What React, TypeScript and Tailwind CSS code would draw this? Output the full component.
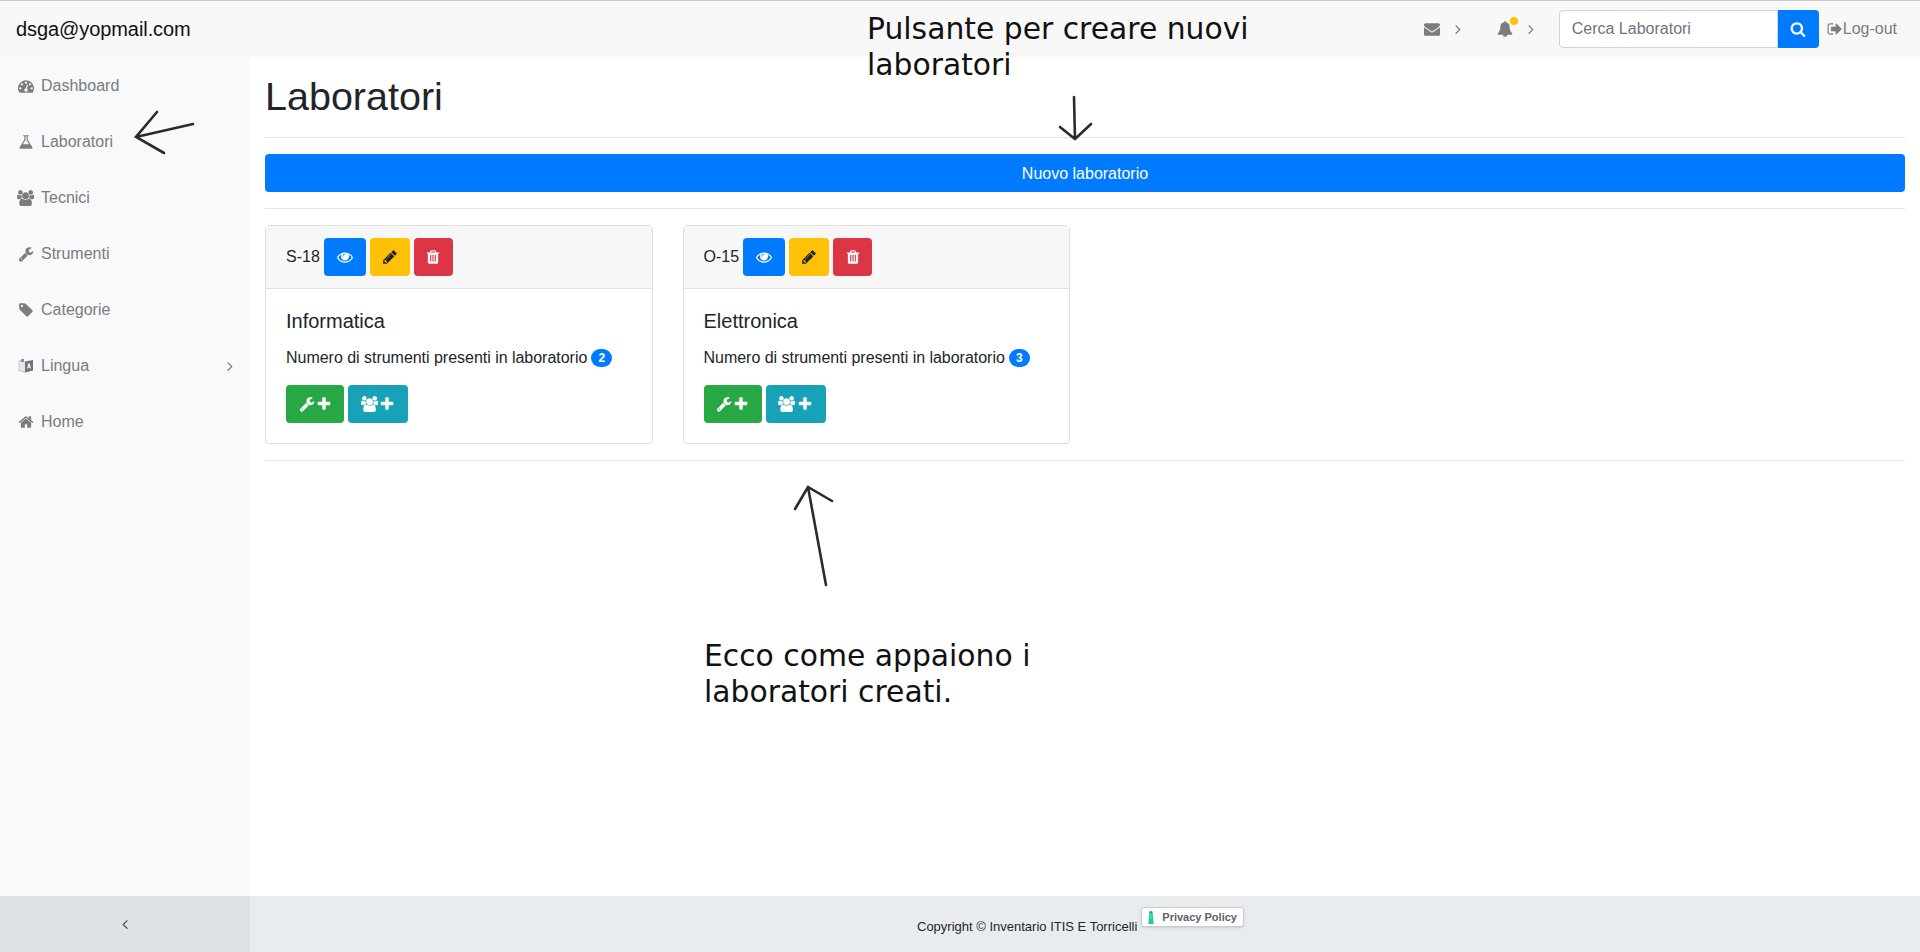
import type { ReactNode } from 'react'

// icone font-awesome 4 (viewBox 1792)
const paths = {
  dashboard:
    'M384 1152q0-53-37.5-90.5t-90.5-37.5-90.5 37.5-37.5 90.5 37.5 90.5 90.5 37.5 90.5-37.5 37.5-90.5zm192-448q0-53-37.5-90.5t-90.5-37.5-90.5 37.5-37.5 90.5 37.5 90.5 90.5 37.5 90.5-37.5 37.5-90.5zm428 481l101-382q6-26-7.5-48.5t-38.5-29.5-48 6.5-30 39.5l-101 382q-60 5-107 43.5t-63 98.5q-20 77 20 146t117 89 146-20 89-117q16-60-6-117t-72-91zm660-33q0-53-37.5-90.5t-90.5-37.5-90.5 37.5-37.5 90.5 37.5 90.5 90.5 37.5 90.5-37.5 37.5-90.5zm-640-640q0-53-37.5-90.5t-90.5-37.5-90.5 37.5-37.5 90.5 37.5 90.5 90.5 37.5 90.5-37.5 37.5-90.5zm448 192q0-53-37.5-90.5t-90.5-37.5-90.5 37.5-37.5 90.5 37.5 90.5 90.5 37.5 90.5-37.5 37.5-90.5zm320 448q0 261-141 483-19 29-54 29h-1402q-35 0-54-29-141-221-141-483 0-182 71-348t191-286 286-191 348-71 348 71 286 191 191 286 71 348z',
  flask:
    'M1591 1448q56 89 21.5 152.5t-140.5 63.5h-1152q-106 0-140.5-63.5t21.5-152.5l503-793v-399h-64q-26 0-45-19t-19-45 19-45 45-19h512q26 0 45 19t19 45-19 45-45 19h-64v399zm-779-725l-272 429h712l-272-429-20-31v-436h-128v436z',
  wrench:
    'M448 1472q0-26-19-45t-45-19-45 19-19 45 19 45 45 19 45-19 19-45zm644-420l-682 682q-37 37-90 37-52 0-91-37l-106-108q-38-36-38-90 0-53 38-91l681-681q39 98 114.5 173.5t173.5 114.5zm634-435q0 39-23 106-47 134-164.5 217.5t-258.5 83.5q-185 0-316.5-131.5t-131.5-316.5 131.5-316.5 316.5-131.5q58 0 121.5 16.5t107.5 46.5q16 11 16 28t-16 28l-293 169v224l193 107q5-3 79-48.5t135.5-81 70.5-35.5q15 0 23.5 10t8.5 25z',
  tag: 'M576 448q0-53-37.5-90.5t-90.5-37.5-90.5 37.5-37.5 90.5 37.5 90.5 90.5 37.5 90.5-37.5 37.5-90.5zm1067 576q0 53-37 90l-491 492q-39 37-91 37-53 0-90-37l-715-716q-38-37-64.5-101t-26.5-117v-416q0-52 38-90t90-38h416q53 0 117 26.5t102 64.5l715 714q37 39 37 91z',
  home: 'M1472 992v480q0 26-19 45t-45 19h-384v-384h-256v384h-384q-26 0-45-19t-19-45v-480q0-1 .5-3t.5-3l575-474 575 474q1 2 1 6zm223-69l-62 74q-8 9-21 11h-3q-13 0-21-7l-692-577-692 577q-12 8-24 7-13-2-21-11l-62-74q-8-10-7-23.5t11-21.5l719-599q32-26 76-26t76 26l244 204v-195q0-14 9-23t23-9h192q14 0 23 9t9 23v408l219 182q10 8 11 21.5t-7 23.5z',
  envelope:
    'M1792 710v794q0 66-47 113t-113 47h-1472q-66 0-113-47t-47-113v-794q44 49 101 87 362 246 497 345 57 42 92.5 65.5t94.5 48 110 24.5h2q51 0 110-24.5t94.5-48 92.5-65.5q170-123 498-345 57-39 100-87zm0-294q0 79-49 151t-122 123q-376 261-468 325-10 7-42.5 30.5t-54 38-52 32.5-57.5 27-50 9h-2q-23 0-50-9t-57.5-27-52-32.5-54-38-42.5-30.5q-91-64-262-182.5t-205-142.5q-62-42-117-115.5t-55-136.5q0-78 41.5-130t118.5-52h1472q65 0 112.5 47t47.5 113z',
  bell: 'M912 1696q0-16-16-16-59 0-101.5-42.5t-42.5-101.5q0-16-16-16t-16 16q0 73 51.5 124.5t124.5 51.5q16 0 16-16zm816-288q0 52-38 90t-90 38h-448q0 106-75 181t-181 75-181-75-75-181h-448q-52 0-90-38t-38-90q50-42 91-88t85-119.5 74.5-158.5 50-206 19.5-260q0-152 117-282.5t307-158.5q-8-19-8-39 0-40 28-68t68-28 68 28 28 68q0 20-8 39 190 28 307 158.5t117 282.5q0 139 19.5 260t50 206 74.5 158.5 85 119.5 91 88z',
  search:
    'M1216 832q0-185-131.5-316.5t-316.5-131.5-316.5 131.5-131.5 316.5 131.5 316.5 316.5 131.5 316.5-131.5 131.5-316.5zm512 832q0 52-38 90t-90 38q-54 0-90-38l-343-342q-179 124-399 124-143 0-273.5-55.5t-225-150-150-225-55.5-273.5 55.5-273.5 150-225 225-150 273.5-55.5 273.5 55.5 225 150 150 225 55.5 273.5q0 220-124 399l343 343q37 37 37 90z',
  signOut:
    'M704 1440q0 4 1 20t.5 26.5-3 23.5-10 19.5-20.5 6.5h-320q-119 0-203.5-84.5t-84.5-203.5v-704q0-119 84.5-203.5t203.5-84.5h320q13 0 22.5 9.5t9.5 22.5q0 4 1 20t.5 26.5-3 23.5-10 19.5-20.5 6.5h-320q-66 0-113 47t-47 113v704q0 66 47 113t113 47h312l11.5 1 11.5 3 8 5.5 7 9 2 13.5zm928-544q0 26-19 45l-544 544q-19 19-45 19t-45-19-19-45v-288h-448q-26 0-45-19t-19-45v-384q0-26 19-45t45-19h448v-288q0-26 19-45t45-19 45 19l544 544q19 19 19 45z',
  pencil:
    'M491 1536l91-91-235-235-91 91v107h128v128h107zm523-928q0-22-22-22-10 0-17 7l-542 542q-7 7-7 17 0 22 22 22 10 0 17-7l542-542q7-7 7-17zm-54-192l416 416-832 832h-416v-416zm683 96q0 53-37 90l-166 166-416-416 166-165q36-38 90-38 53 0 91 38l235 234q37 39 37 91z',
  trash:
    'M704 1376v-704q0-14-9-23t-23-9h-64q-14 0-23 9t-9 23v704q0 14 9 23t23 9h64q14 0 23-9t9-23zm256 0v-704q0-14-9-23t-23-9h-64q-14 0-23 9t-9 23v704q0 14 9 23t23 9h64q14 0 23-9t9-23zm256 0v-704q0-14-9-23t-23-9h-64q-14 0-23 9t-9 23v704q0 14 9 23t23 9h64q14 0 23-9t9-23zm-544-992h448l-48-117q-7-9-17-11h-317q-10 2-17 11zm928 32v64q0 14-9 23t-23 9h-96v948q0 83-47 143.5t-113 60.5h-832q-66 0-113-58.5t-47-141.5v-952h-96q-14 0-23-9t-9-23v-64q0-14 9-23t23-9h309l70-167q15-37 54-63t79-26h320q40 0 79 26t54 63l70 167h309q14 0 23 9t9 23z',
  eye: 'M1664 960q-152-236-381-353 61 104 61 225 0 185-131.5 316.5t-316.5 131.5-316.5-131.5-131.5-316.5q0-121 61-225-229 117-381 353 133 205 333.5 326.5t434.5 121.5 434.5-121.5 333.5-326.5zm-720-384q0-20-14-34t-34-14q-125 0-214.5 89.5t-89.5 214.5q0 20 14 34t34 14 34-14 14-34q0-86 61-147t147-61q20 0 34-14t14-34zm848 384q0 34-20 69-140 230-376.5 368.5t-499.5 138.5-499.5-139-376.5-368q-20-35-20-69t20-69q140-229 376.5-368t499.5-139 499.5 139 376.5 368q20 35 20 69z',
  plus: 'M1600 736v192q0 40-28 68t-68 28h-416v416q0 40-28 68t-68 28h-192q-40 0-68-28t-28-68v-416h-416q-40 0-68-28t-28-68v-192q0-40 28-68t68-28h416v-416q0-40 28-68t68-28h192q40 0 68 28t28 68v416h416q40 0 68 28t28 68z',
  angleRight:
    'M1171 960q0 13-10 23l-466 466q-10 10-23 10t-23-10l-50-50q-10-10-10-23t10-23l393-393-393-393q-10-10-10-23t10-23l50-50q10-10 23-10t23 10l466 466q10 10 10 23z',
  angleLeft:
    'M1203 544q0 13-10 23l-393 393 393 393q10 10 10 23t-10 23l-50 50q-10 10-23 10t-23-10l-466-466q-10-10-10-23t10-23l466-466q10-10 23-10t23 10l50 50q10 10 10 23z',
}

function Fa({ name, size = 16 }: { name: keyof typeof paths; size?: number }) {
  return (
    <svg width={size} height={size} viewBox="0 0 1792 1792" fill="currentColor" className="shrink-0">
      <path d={paths[name]} />
    </svg>
  )
}

function UsersIcon({ size = 16 }: { size?: number }) {
  return (
    <svg width={(size * 1920) / 1792} height={size} viewBox="0 0 1920 1792" fill="currentColor" className="shrink-0">
      <path d="M593 896q-162 5-265 128h-134q-82 0-138-40.5t-56-118.5q0-353 124-353 6 0 43.5 21t97.5 42.5 119 21.5q67 0 133-23-5 37-5 66 0 139 81 256zm1071 637q0 120-73 189.5t-194 69.5h-874q-121 0-194-69.5t-73-189.5q0-53 3.5-103.5t14-109 26.5-108.5 43-97.5 62-81 85.5-53.5 111.5-20q10 0 43 21.5t73 48 107 48 135 21.5 135-21.5 107-48 73-48 43-21.5q61 0 111.5 20t85.5 53.5 62 81 43 97.5 26.5 108.5 14 109 3.5 103.5zm-1024-1277q0 106-75 181t-181 75-181-75-75-181 75-181 181-75 181 75 75 181zm704 384q0 159-112.5 271.5t-271.5 112.5-271.5-112.5-112.5-271.5 112.5-271.5 271.5-112.5 271.5 112.5 112.5 271.5zm576 225q0 78-56 118.5t-138 40.5h-134q-103-123-265-128 81-117 81-256 0-29-5-66 66 23 133 23 59 0 119-21.5t97.5-42.5 43.5-21q124 0 124 353zm-128-609q0 106-75 181t-181 75-181-75-75-181 75-181 181-75 181 75 75 181z" />
    </svg>
  )
}

function LanguageIcon() {
  return (
    <svg width="16" height="16" viewBox="0 0 16 16" className="shrink-0">
      <path d="M1 2.5l6.5 2v10l-6.5-2z" fill="#e4e6e8" stroke="#aab0b5" strokeWidth=".6" />
      <path d="M7 3.5l8-1.5v10.5l-8 2z" fill="#6f7479" />
      <path d="M3 1h3v3H3z" fill="#8a9096" />
      <path d="M9.5 10.5l1.5-5 1.5 5M10 9h2" stroke="#fff" strokeWidth="1" fill="none" />
    </svg>
  )
}

function PrivacyIcon() {
  return (
    <svg width="6" height="14" viewBox="0 0 6 14" className="shrink-0 mr-[8px]">
      <path d="M1.2 2.5a1.8 1.8 0 0 1 3.6 0V5L5.6 13.2a.7.7 0 0 1-.7.8H1.1a.7.7 0 0 1-.7-.8L1.2 5z" fill="#1ccf96" />
      <circle cx="3" cy="2.4" r=".7" fill="#0f8f68" />
      <path d="M3 4v5" stroke="#5fe3b8" strokeWidth=".9" />
    </svg>
  )
}

const menu: { label: string; icon: ReactNode; arrow?: boolean }[] = [
  { label: 'Dashboard', icon: <Fa name="dashboard" /> },
  { label: 'Laboratori', icon: <Fa name="flask" /> },
  { label: 'Tecnici', icon: <UsersIcon /> },
  { label: 'Strumenti', icon: <Fa name="wrench" /> },
  { label: 'Categorie', icon: <Fa name="tag" /> },
  { label: 'Lingua', icon: <LanguageIcon />, arrow: true },
  { label: 'Home', icon: <Fa name="home" /> },
]

const labs = [
  { code: 'S-18', name: 'Informatica', count: 2 },
  { code: 'O-15', name: 'Elettronica', count: 3 },
]

function LabCard({ code, name, count }: { code: string; name: string; count: number }) {
  return (
    <div className="w-[387.5px] h-[219px] mr-[30px] bg-white border border-[#dfdfdf] rounded">
      <div className="h-[63px] px-5 flex items-center gap-1 bg-[#f7f7f7] border-b border-[#dfdfdf] text-[#212529]">
        <span>{code}</span>
        <button className="w-[42px] h-[38px] rounded bg-[#007bff] text-white flex items-center justify-center">
          <Fa name="eye" />
        </button>
        <button className="w-10 h-[38px] rounded bg-[#ffc107] text-[#212529] flex items-center justify-center">
          <Fa name="pencil" />
        </button>
        <button className="w-[39px] h-[38px] rounded bg-[#dc3545] text-white flex items-center justify-center">
          <Fa name="trash" />
        </button>
      </div>
      <div className="p-5 text-[#212529]">
        <h5 className="text-xl leading-6">{name}</h5>
        <p className="mt-[13px] h-6 flex items-center tracking-[-0.025px]">
          Numero di strumenti presenti in laboratorio
          <span className="ml-1 w-[21px] h-[18px] rounded-full bg-[#007bff] text-white text-xs font-bold flex items-center justify-center">
            {count}
          </span>
        </p>
        <div className="mt-[15px] flex gap-1">
          <button className="w-[58px] h-[38px] rounded bg-[#28a745] text-white flex items-center justify-center gap-[1px]">
            <Fa name="wrench" />
            <Fa name="plus" />
          </button>
          <button className="w-[60px] h-[38px] rounded bg-[#17a2b8] text-white flex items-center justify-center gap-[1px]">
            <UsersIcon />
            <Fa name="plus" />
          </button>
        </div>
      </div>
    </div>
  )
}

export default function App() {
  return (
    <div className="relative h-[952px] flex flex-col overflow-hidden bg-white font-['Liberation_Sans',Arial,sans-serif]">
      <header className="h-[57px] shrink-0 flex items-center bg-[#f8f8f8] border-t border-[#c8c8c8]">
        <span className="ml-4 text-xl text-[#111] tracking-[-0.08px]">dsga@yopmail.com</span>
        <div className="ml-auto flex items-center text-[#7c7c7d]">
          <Fa name="envelope" />
          <span className="ml-[10px]">
            <Fa name="angleRight" />
          </span>
          <div className="relative ml-[31px]">
            <Fa name="bell" />
            <span className="absolute left-[13px] top-[-4px] w-2 h-2 rounded-full bg-[#ffc107]" />
          </div>
          <span className="ml-[10px]">
            <Fa name="angleRight" />
          </span>
          <div className="ml-[20px] flex h-[38px]">
            <input
              placeholder="Cerca Laboratori"
              className="w-[219px] px-3 border border-[#ced4da] rounded-l bg-white text-base outline-none placeholder:text-[#6c757d]"
            />
            <button className="w-[41px] rounded-r bg-[#007bff] text-white flex items-center justify-center">
              <Fa name="search" />
            </button>
          </div>
          <div className="ml-2 mr-[23px] flex items-center">
            <Fa name="signOut" />
            <span className="text-base">Log-out</span>
          </div>
        </div>
      </header>

      <div className="flex-1 flex min-h-0">
        <aside className="w-[250px] shrink-0 bg-[#f8f9fa] pt-px">
          {menu.map((item) => (
            <div key={item.label} className="h-14 flex items-center pl-[18px] pr-[12px] text-[#7c7c7d]">
              <span className="w-4 flex justify-center">{item.icon}</span>
              <span className="ml-[7px]">{item.label}</span>
              {item.arrow && (
                <span className="ml-auto">
                  <Fa name="angleRight" />
                </span>
              )}
            </div>
          ))}
        </aside>

        <main className="flex-1 px-[15px] pt-3">
          <h1 className="h-[56px] flex items-center text-[39.5px] text-[#212529]">Laboratori</h1>
          <hr className="mt-3 border-[#e5e5e5]" />
          <button className="mt-4 w-full h-[38px] pt-px rounded bg-[#007bff] text-white text-base">Nuovo laboratorio</button>
          <hr className="mt-4 border-[#e5e5e5]" />
          <div className="mt-4 flex">
            {labs.map((lab) => (
              <LabCard key={lab.code} {...lab} />
            ))}
          </div>
          <hr className="mt-4 border-[#e5e5e5]" />
        </main>
      </div>

      <footer className="h-[56px] shrink-0 flex bg-[#e9ecef]">
        <div className="w-[250px] bg-[#dee2e6] flex items-center justify-center text-[#495057]">
          <Fa name="angleLeft" />
        </div>
        <div className="flex-1 relative flex items-start">
          <span className="ml-[667px] mt-[21px] text-[13px] text-[#212529]">Copyright © Inventario ITIS E Torricelli</span>
          <span className="ml-1 mt-[11px] w-[103px] h-[20px] rounded-[3px] bg-white border border-[#ccc] shadow-sm flex items-center pl-1.5 text-[11px] font-bold text-[#59636d]">
            <PrivacyIcon />
            Privacy Policy
          </span>
        </div>
      </footer>

      {/* annotazioni sopra la pagina */}
      <div className="absolute left-[867px] top-[11px] w-[420px] font-['DejaVu_Sans',sans-serif] text-[29.8px] leading-[35.5px] text-[#111]">
        Pulsante per creare nuovi laboratori
      </div>
      <div className="absolute left-[704px] top-[638px] w-[380px] font-['DejaVu_Sans',sans-serif] text-[29.8px] leading-[36px] text-[#111]">
        Ecco come appaiono i laboratori creati.
      </div>
      <svg className="absolute left-0 top-0 pointer-events-none" width="1920" height="952" fill="none" stroke="#2b2b2b" strokeWidth="2.6" strokeLinecap="round">
        <path d="M193 124L136 137M157 112L136 137L164 153" />
        <path d="M1074 97L1075 139M1060 127L1075 139L1091 124" />
        <path d="M826 585L808 487M795 509L808 487L832 501" />
      </svg>
    </div>
  )
}
